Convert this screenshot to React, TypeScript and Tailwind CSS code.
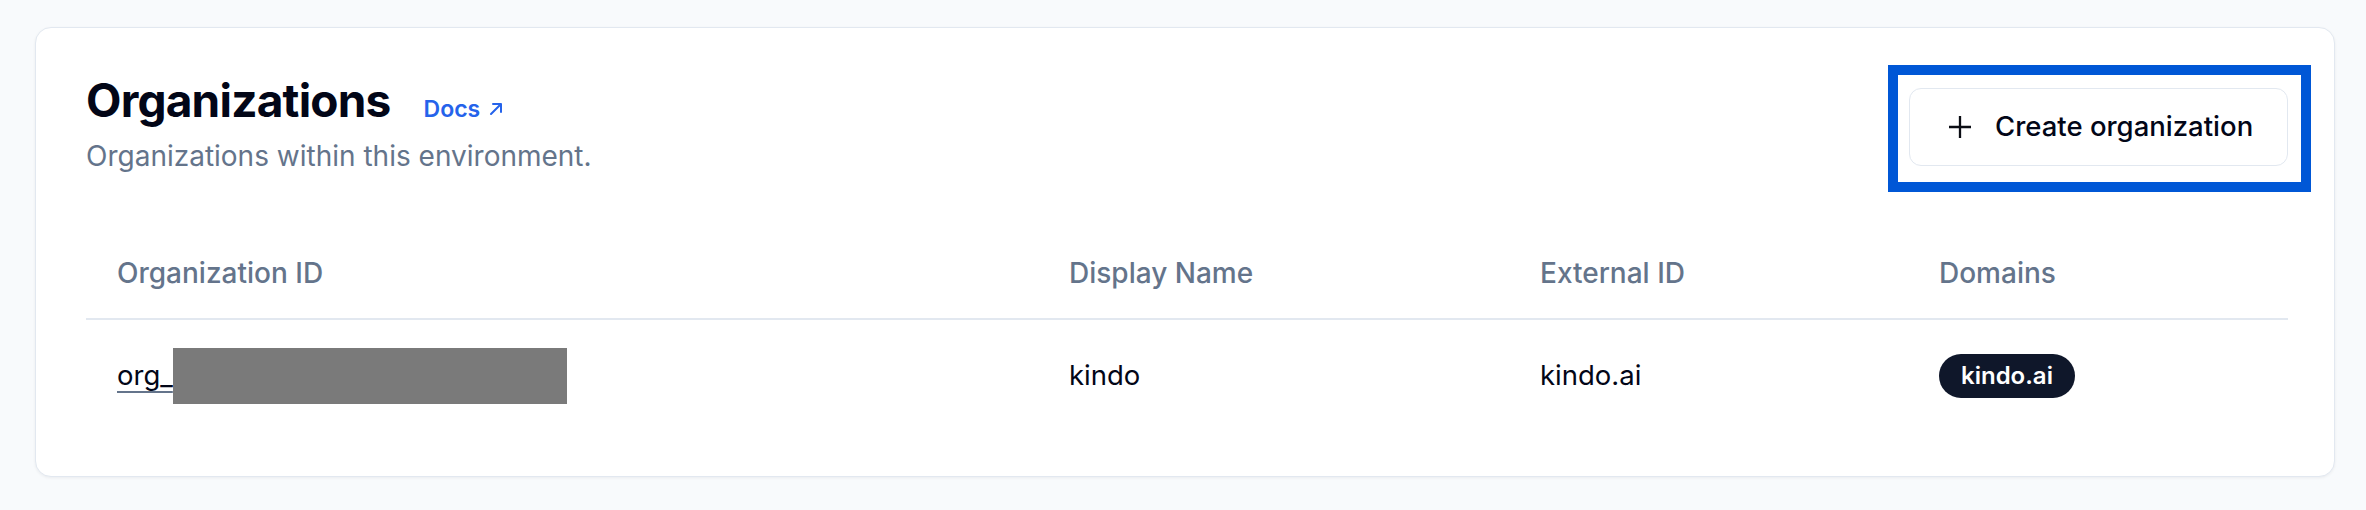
import React from "react";

function PlusIcon() {
  return (
    <svg width="24" height="24" viewBox="0 0 24 24" fill="none" stroke="#0b0d14" strokeWidth="2.3" strokeLinecap="butt">
      <path d="M12 1v22M1 12h22" />
    </svg>
  );
}

function ArrowUpRightIcon() {
  return (
    <svg width="14" height="14" viewBox="0 0 14 14" fill="none" stroke="#2563eb" strokeWidth="2" strokeLinecap="round" strokeLinejoin="round">
      <path d="M2 12L12 2M4 2h8v8" />
    </svg>
  );
}

export default function App() {
  return (
    <div className="min-h-[510px] w-full bg-[#f8fafc] pt-[27px] pl-[35px] pr-[31px] font-['Inter',sans-serif]">
      <div className="h-[450px] rounded-[16px] border border-[#e2e8f0] bg-white pl-[50px] pr-[46px] pt-[45px] shadow-[0_1px_3px_rgba(15,23,42,0.06)]">
        <div className="flex items-start justify-between">
          <div className="flex flex-col">
            <div className="flex items-baseline gap-[33px]">
              <h1 className="text-[46px] leading-[54px] font-bold tracking-[-0.8px] text-[#020617]">Organizations</h1>
              <a className="flex items-center gap-[9px] text-[23px] font-semibold text-[#2563eb]">
                Docs
                <ArrowUpRightIcon />
              </a>
            </div>
            <p className="mt-[11px] text-[28px] leading-[37px] text-[#64748b]">Organizations within this environment.</p>
          </div>
          <div className="relative mt-[15px]">
            <div className="absolute left-[-21px] right-[-23px] top-[-23px] bottom-[-26px] border-[10px] border-[#0057d6]" />
            <button className="flex h-[78px] w-[379px] items-center gap-[23px] rounded-[12px] border border-[#e2e8f0] bg-white pl-[38px] text-[27.5px] font-medium text-[#020617]">
              <PlusIcon />
              Create organization
            </button>
          </div>
        </div>

        <div className="mt-[53px]">
          <div className="grid h-[92px] grid-cols-[952px_471px_399px_1fr] items-center border-b-2 border-[#e2e8f0] text-[28px] font-medium text-[#64748b]">
            <div className="pl-[31px]">Organization ID</div>
            <div className="pl-[31px]">Display Name</div>
            <div className="pl-[31px]">External ID</div>
            <div className="pl-[31px]">Domains</div>
          </div>
          <div className="grid h-[112px] grid-cols-[952px_471px_399px_1fr] items-center text-[27.5px] text-[#020617]">
            <div className="flex items-center pl-[31px]">
              <span className="underline decoration-[#64748b] decoration-2 underline-offset-[6px]">org_</span>
              <span className="h-[56px] w-[394px] bg-[#7a7a7a]" />
            </div>
            <div className="pl-[31px]">kindo</div>
            <div className="pl-[31px]">kindo.ai</div>
            <div className="pl-[31px]">
              <span className="inline-flex h-[44px] items-center rounded-full bg-[#0f172a] px-[22px] text-[24px] font-semibold text-white">kindo.ai</span>
            </div>
          </div>
        </div>
      </div>
    </div>
  );
}
